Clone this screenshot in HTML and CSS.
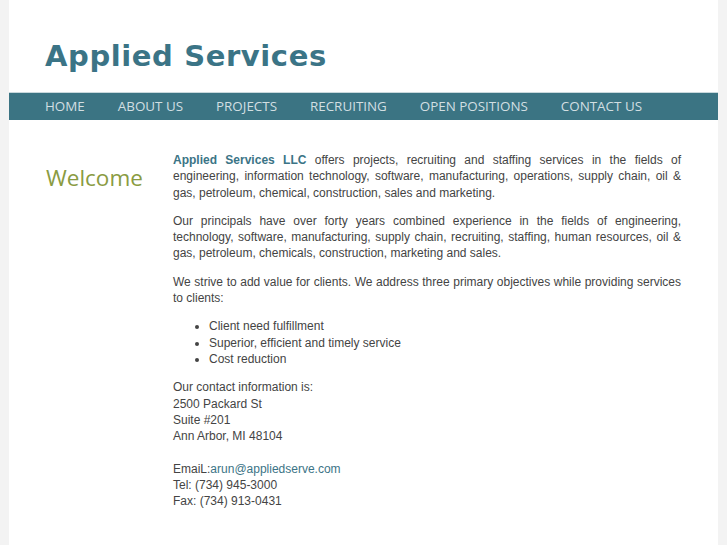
FILE: index.html
```html
<!DOCTYPE html>
<html>
<head>
<meta charset="utf-8">
<title>Applied Services</title>
<link rel="stylesheet" href="styles.css">
</head>
<body>
<div class="page">
  <header class="header">
    <h1 class="site-title">Applied Services</h1>
  </header>
  <nav class="nav">
    <a href="#">HOME</a>
    <a href="#">ABOUT US</a>
    <a href="#">PROJECTS</a>
    <a href="#">RECRUITING</a>
    <a href="#">OPEN POSITIONS</a>
    <a href="#">CONTACT US</a>
  </nav>
  <div class="content">
    <aside class="side">
      <h2 class="welcome">Welcome</h2>
    </aside>
    <main class="main">
      <p><strong class="brand">Applied Services LLC</strong> offers projects, recruiting and staffing services in the fields of engineering, information technology, software, manufacturing, operations, supply chain, oil &amp; gas, petroleum, chemical, construction, sales and marketing.</p>
      <p>Our principals have over forty years combined experience in the fields of engineering, technology, software, manufacturing, supply chain, recruiting, staffing, human resources, oil &amp; gas, petroleum, chemicals, construction, marketing and sales.</p>
      <p>We strive to add value for clients. We address three primary objectives while providing services to clients:</p>
      <ul class="list">
        <li>Client need fulfillment</li>
        <li>Superior, efficient and timely service</li>
        <li>Cost reduction</li>
      </ul>
      <p class="contact">Our contact information is:<br>2500 Packard St<br>Suite #201<br>Ann Arbor, MI 48104<br><br>EmaiL:<a href="#">arun@appliedserve.com</a><br>Tel: (734) 945-3000<br>Fax: (734) 913-0431</p>
    </main>
  </div>
</div>
</body>
</html>
```
FILE: styles.css
```css
html, body {
  margin: 0;
  padding: 0;
  background: #f3f3f3;
}
.page {
  margin-left: 9px;
  width: 709px;
  min-height: 545px;
  background: #ffffff;
}
.header {
  height: 92px;
  padding-left: 36px;
  display: flex;
  align-items: flex-start;
}
.site-title {
  margin: 39px 0 0 0;
  font-family: "DejaVu Sans", sans-serif;
  font-weight: bold;
  font-size: 29px;
  letter-spacing: 0.6px;
  color: #3b7486;
  line-height: 34px;
}
.nav {
  height: 27px;
  border-top: 1px solid #c9d9dd;
  background: #3b7483;
  display: flex;
  align-items: center;
  padding-left: 36px;
  gap: 33px;
}
.nav a {
  font-family: "Open Sans", sans-serif;
  font-size: 13.4px;
  line-height: 16px;
  margin-top: -2px;
  color: #d2dfe2;
  text-decoration: none;
}
.content {
  display: flex;
  padding: 32px 37px 20px 37px;
}
.side {
  width: 127px;
  flex: none;
}
.welcome {
  margin: 12px 0 0 0;
  font-family: "Open Sans", sans-serif;
  font-weight: normal;
  font-size: 22.5px;
  color: #8a9b42;
  line-height: 28px;
}
.main {
  width: 508px;
  font-family: "Liberation Sans", Arial, sans-serif;
  font-size: 12px;
  line-height: 16.3px;
  color: #444444;
}
.main p {
  margin: 0 0 12px 0;
  text-align: justify;
}
.brand {
  color: #3b7486;
}
.list {
  margin: 0 0 12px 0;
  padding-left: 36px;
}
.main p.contact {
  text-align: left;
}
.contact a {
  color: #3b7486;
  text-decoration: none;
}
```
